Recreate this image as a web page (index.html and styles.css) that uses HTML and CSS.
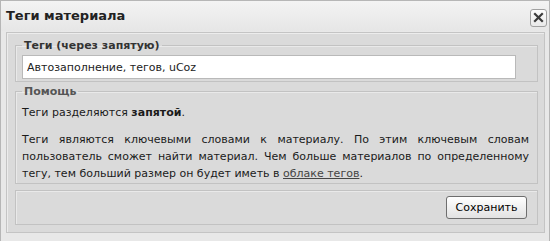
FILE: index.html
```html
<!DOCTYPE html>
<html lang="ru">
<head>
    <meta charset="UTF-8">
    <title>Теги материала</title>
    <link rel="stylesheet" href="styles.css">
</head>
<body>
    <div class="dialog">
        <div class="titlebar">
            <span class="title">Теги материала</span>
            <button class="close" title="Закрыть">
                <svg width="11" height="11" viewBox="0 0 11 11">
                    <path d="M2 2 L9 9 M9 2 L2 9" stroke="#3c3c3c" stroke-width="2.2" stroke-linecap="square"/>
                </svg>
            </button>
        </div>

        <div class="panel">
            <fieldset class="group">
                <legend>Теги (через запятую)</legend>
                <input type="text" class="tags-input" value="Автозаполнение, тегов, uCoz">
            </fieldset>

            <fieldset class="group help">
                <legend>Помощь</legend>
                <p>Теги разделяются <b>запятой</b>.</p>
                <p class="justify">Теги являются ключевыми словами к материалу. По этим ключевым словам пользователь сможет найти материал. Чем больше материалов по определенному тегу, тем больший размер он будет иметь в <a href="#">облаке тегов</a>.</p>
            </fieldset>

            <div class="actions">
                <button class="save-btn">Сохранить</button>
            </div>
        </div>
    </div>
</body>
</html>
```

FILE: styles.css
```css
body {
    margin: 0;
    font-family: "DejaVu Sans", Verdana, sans-serif;
    font-size: 11px;
    color: #000;
    background: #fff;
}

.dialog {
    width: 550px;
    height: 241px;
    box-sizing: border-box;
    border: 1px solid #b6b6b6;
    border-bottom: none;
    background: #e8e8e8;
}

.titlebar {
    height: 30px;
    display: flex;
    align-items: center;
    justify-content: space-between;
    padding: 0 2px 0 5px;
    background: linear-gradient(#f3f3f3, #e6e6e6);
}

.title {
    font-size: 13px;
    font-weight: bold;
    color: #222;
    margin-top: -2px;
}

.close {
    width: 17px;
    height: 18px;
    padding: 0;
    margin-top: 3px;
    display: flex;
    align-items: center;
    justify-content: center;
    border: 1px solid #a0a0a0;
    border-radius: 3px;
    background: linear-gradient(#fdfdfd, #e9e9e9);
}

.panel {
    height: 201px;
    box-sizing: border-box;
    margin: 1px 4px 0 5px;
    padding: 6px 6px 0 8px;
    border: 1px solid #c4c4c4;
    box-shadow: inset 1px 1px 0 #ececec;
    background: #dadada;
}

.group {
    margin: 0;
    padding: 0 6px 2px 6px;
    border: 1px solid #c2c2c2;
    box-shadow: inset 1px 1px 0 #e9e9e9;
}

.group legend {
    padding: 0 2px;
    font-weight: bold;
    color: #333;
    line-height: 13px;
}

.tags-input {
    width: 494px;
    height: 24px;
    box-sizing: border-box;
    margin-top: 3px;
    padding: 0 4px;
    border: 1px solid #b9b9b9;
    background: #fff;
    font-family: inherit;
    font-size: 11px;
    color: #222;
}

.help {
    margin-top: 3px;
    padding: 0 8px 1px 6px;
}

.help legend {
    color: #555;
}

.help p {
    margin: 6px 0 0;
    line-height: 17px;
    color: #1a1a1a;
}

.help p.justify {
    margin-top: 10px;
    text-align: justify;
}

.help a {
    color: #444;
}

.actions {
    margin-top: 6px;
    height: 35px;
    box-sizing: border-box;
    display: flex;
    align-items: center;
    justify-content: flex-end;
    padding-right: 10px;
    border: 1px solid #c2c2c2;
    box-shadow: inset 1px 1px 0 #e9e9e9;
}

.save-btn {
    width: 81px;
    height: 23px;
    padding: 0;
    border: 1px solid #6e6e6e;
    border-radius: 3px;
    background: linear-gradient(#ffffff, #e2e2e2);
    font-family: inherit;
    font-size: 11px;
    color: #000;
}
```
